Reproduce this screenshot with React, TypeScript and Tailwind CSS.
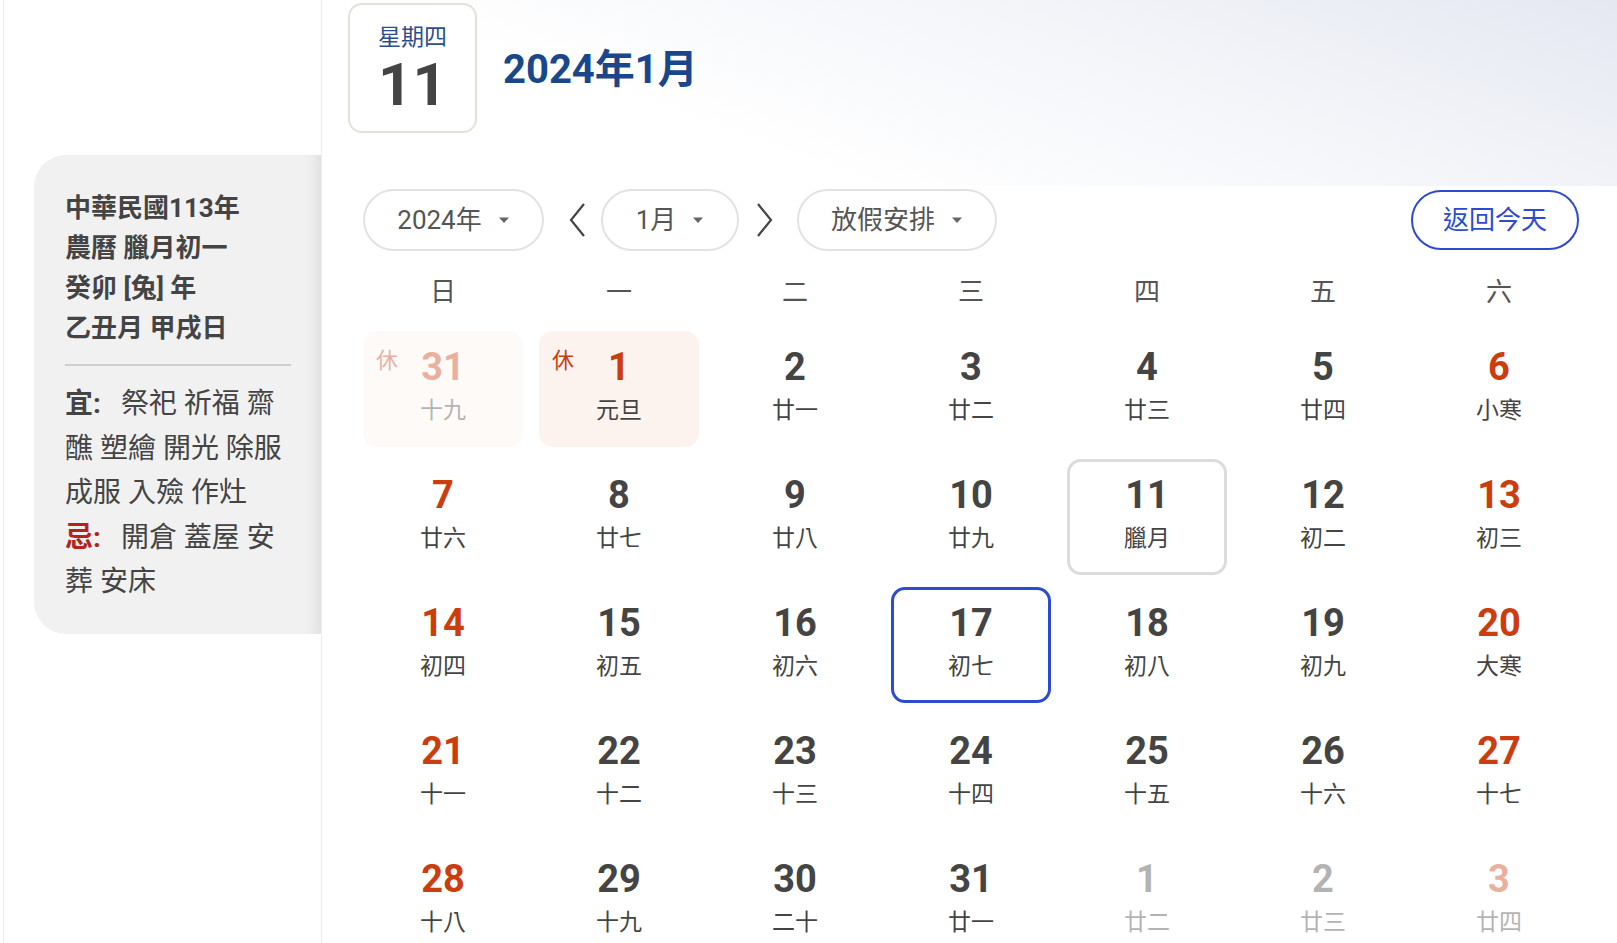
import React from "react";

type Day = {
  d: number;
  lunar: string;
  red?: boolean;
  off?: boolean;
  rest?: boolean;
  today?: boolean;
  picked?: boolean;
};

const weeks: Day[][] = [
  [
    { d: 31, lunar: "十九", red: true, off: true, rest: true },
    { d: 1, lunar: "元旦", red: true, rest: true },
    { d: 2, lunar: "廿一" },
    { d: 3, lunar: "廿二" },
    { d: 4, lunar: "廿三" },
    { d: 5, lunar: "廿四" },
    { d: 6, lunar: "小寒", red: true },
  ],
  [
    { d: 7, lunar: "廿六", red: true },
    { d: 8, lunar: "廿七" },
    { d: 9, lunar: "廿八" },
    { d: 10, lunar: "廿九" },
    { d: 11, lunar: "臘月", today: true },
    { d: 12, lunar: "初二" },
    { d: 13, lunar: "初三", red: true },
  ],
  [
    { d: 14, lunar: "初四", red: true },
    { d: 15, lunar: "初五" },
    { d: 16, lunar: "初六" },
    { d: 17, lunar: "初七", picked: true },
    { d: 18, lunar: "初八" },
    { d: 19, lunar: "初九" },
    { d: 20, lunar: "大寒", red: true },
  ],
  [
    { d: 21, lunar: "十一", red: true },
    { d: 22, lunar: "十二" },
    { d: 23, lunar: "十三" },
    { d: 24, lunar: "十四" },
    { d: 25, lunar: "十五" },
    { d: 26, lunar: "十六" },
    { d: 27, lunar: "十七", red: true },
  ],
  [
    { d: 28, lunar: "十八", red: true },
    { d: 29, lunar: "十九" },
    { d: 30, lunar: "二十" },
    { d: 31, lunar: "廿一" },
    { d: 1, lunar: "廿二", off: true },
    { d: 2, lunar: "廿三", off: true },
    { d: 3, lunar: "廿四", red: true, off: true },
  ],
];

const weekdays = ["日", "一", "二", "三", "四", "五", "六"];

const Caret = () => (
  <svg width="12" height="8" viewBox="0 0 12 8" className="shrink-0">
    <path d="M1 1.5h10L6 7z" fill="#666" />
  </svg>
);

const Pill = ({ label, w }: { label: string; w: string }) => (
  <div
    className={`${w} h-[62px] rounded-full border-2 border-[#e2e2e2] bg-white flex items-center justify-center gap-[16px] text-[26px] text-[#555]`}
  >
    <span>{label}</span>
    <Caret />
  </div>
);

const Chevron = ({ right }: { right?: boolean }) => (
  <svg width="22" height="38" viewBox="0 0 22 38" className="shrink-0">
    <path
      d={right ? "M5 3l13 16L5 35" : "M17 3L4 19l13 16"}
      fill="none"
      stroke="#444"
      strokeWidth="2.2"
    />
  </svg>
);

const Cell = ({ day }: { day: Day }) => {
  let box = "border-[3px] border-transparent";
  if (day.today) box = "border-[3px] border-[#dcdcdc]";
  if (day.picked) box = "border-[3px] border-[#2c4bcf]";
  const bg = day.rest ? "bg-[#fcf3ef]" : "bg-white";
  return (
    <div
      className={`relative h-[116px] rounded-[14px] ${box} ${bg} flex flex-col items-center pt-[11px] ${
        day.off ? "opacity-40" : ""
      }`}
    >
      {day.rest && (
        <span className="absolute left-[10px] top-[16px] text-[22px] leading-none text-[#c93d14]">
          休
        </span>
      )}
      <span
        className={`text-[38px] leading-[44px] font-bold ${
          day.red ? "text-[#cc3d0e]" : "text-[#444]"
        }`}
      >
        {day.d}
      </span>
      <span className="mt-[7px] text-[23px] leading-[30px] text-[#444]">
        {day.lunar}
      </span>
    </div>
  );
};

export default function App() {
  return (
    <div
      className="flex h-[943px] w-full overflow-hidden bg-white text-[#444]"
      style={{ fontFamily: 'Roboto, "Noto Sans CJK TC", sans-serif' }}
    >
      {/* left column */}
      <div className="ml-[3px] w-[319px] shrink-0 border-x border-[#ececec]">
        <div className="mt-[155px] ml-[30px] rounded-l-[32px] bg-[#f1f1f1] pl-[31px] pr-[30px] pt-[33px] pb-[29px] shadow-[inset_-14px_0_14px_-10px_rgba(0,0,0,0.09)]">
          <div className="text-[26px] leading-[40px] font-bold text-[#444]">
            <div>中華民國113年</div>
            <div>農曆 臘月初一</div>
            <div>癸卯 [兔] 年</div>
            <div>乙丑月 甲戌日</div>
          </div>
          <div className="my-[16px] h-[2px] bg-[#cfcfcf]" />
          <div className="text-[28px] leading-[44.5px] text-[#444]">
            <div>
              <span className="mr-[20px] font-bold">宜:</span>
              祭祀 祈福 齋醮 塑繪 開光 除服 成服 入殮 作灶
            </div>
            <div>
              <span className="mr-[20px] font-bold text-[#b3241c]">忌:</span>
              開倉 蓋屋 安葬 安床
            </div>
          </div>
        </div>
      </div>

      {/* main */}
      <div className="min-w-0 flex-1">
        <div className="h-[186px] bg-[linear-gradient(200deg,#e5e8f1_0%,#f3f5f9_35%,#ffffff_70%)] pl-[26px] pt-[3px]">
          <div className="flex items-center gap-[26px]">
            <div className="flex h-[130px] w-[129px] flex-col items-center rounded-[14px] border-2 border-[#dfe5d6] bg-white pt-[18px]">
              <span className="text-[23px] leading-[30px] text-[#2d4e8e]">星期四</span>
              <span className="mt-[2px] text-[60px] leading-[60px] font-bold text-[#444]">
                11
              </span>
            </div>
            <h1 className="mt-[4px] text-[40px] font-bold text-[#1a468c]">2024年1月</h1>
          </div>
        </div>

        <div className="pl-[41px] pr-[38px]">
          <div className="mt-[3px] flex items-center">
            <Pill label="2024年" w="w-[181px]" />
            <div className="flex w-[57px] justify-center pl-[10px]">
              <Chevron />
            </div>
            <Pill label="1月" w="w-[138px]" />
            <div className="flex w-[58px] justify-center pr-[8px]">
              <Chevron right />
            </div>
            <Pill label="放假安排" w="w-[200px]" />
            <div className="ml-auto flex h-[60px] w-[168px] items-center justify-center rounded-full border-2 border-[#2c4bcf] text-[26px] text-[#2c4bcf]">
              返回今天
            </div>
          </div>

          <div className="mt-[21px] grid grid-cols-7 gap-x-[16px]">
            {weekdays.map((w) => (
              <div
                key={w}
                className="flex h-[40px] items-center justify-center text-[26px] text-[#555]"
              >
                {w}
              </div>
            ))}
          </div>

          <div className="mt-[19px] grid grid-cols-7 gap-x-[16px] gap-y-[12px]">
            {weeks.flat().map((day, i) => (
              <Cell key={i} day={day} />
            ))}
          </div>
        </div>
      </div>
    </div>
  );
}
